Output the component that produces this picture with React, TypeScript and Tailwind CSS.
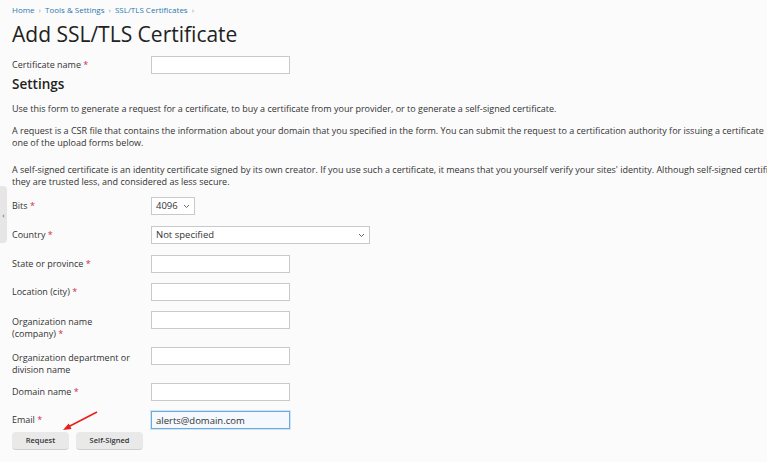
import React from "react";

const Req = () => <span className="text-[#d02d4a]"> *</span>;

interface RowProps {
  label: React.ReactNode;
  children: React.ReactNode;
  h: string;
}

// label's first line lines up with the middle of the field
const Row: React.FC<RowProps> = ({ label, children, h }) => (
  <div className={`flex items-start ${h}`}>
    <div className="w-[139px] shrink-0 pt-[3px] text-[9px] leading-[12px] text-[#333]">
      {label}
    </div>
    {children}
  </div>
);

const TextBox = ({ value = "" }: { value?: string }) => (
  <input
    type="text"
    defaultValue={value}
    className="h-[18px] w-[139px] border border-[#c9c9c9] bg-white px-1 text-[9.5px] outline-none"
  />
);

const Chevron = () => (
  <svg width="7" height="5" viewBox="0 0 7 5" className="text-[#555]">
    <path d="M1 1l2.5 2.5L6 1" fill="none" stroke="currentColor" strokeWidth="0.9" />
  </svg>
);

export default function App() {
  return (
    <div className="relative h-[462px] w-[767px] overflow-hidden bg-[#fbfbfb] font-['Open_Sans',sans-serif] text-[#333]">
      {/* side collapse tab */}
      <div className="absolute left-0 top-[186px] flex h-[57px] w-[7px] items-center justify-center rounded-r-sm bg-[#e6e6e6] text-[8px] text-[#555]">
        ‹
      </div>

      <div className="w-[900px] px-3 pt-[5px]">
        <nav className="flex items-center gap-[4px] text-[8px] leading-[10px] text-[#2a7ab0]">
          <span>Home</span>
          <span className="text-[#999]">›</span>
          <span>Tools &amp; Settings</span>
          <span className="text-[#999]">›</span>
          <span>SSL/TLS Certificates</span>
          <span className="text-[#999]">›</span>
        </nav>

        <h1 className="mt-[5px] text-[21px] leading-[28px] text-[#222]">
          Add SSL/TLS Certificate
        </h1>

        <div className="mt-[8px] flex h-[18px] items-center">
          <div className="w-[139px] shrink-0 text-[9px] leading-[12px]">
            Certificate name<Req />
          </div>
          <TextBox />
        </div>

        <h2 className="mt-[1px] text-[13.5px] font-semibold leading-[18px] text-[#222]">
          Settings
        </h2>

        <div className="mt-[10px] whitespace-nowrap text-[9px] leading-[12px] text-[#333]">
          <p>
            Use this form to generate a request for a certificate, to buy a certificate from your provider, or to generate a self-signed certificate.
          </p>
          <p className="mt-[10px]">
            A request is a CSR file that contains the information about your domain that you specified in the form. You can submit the request to a certification authority for issuing a certificate
            <br />
            one of the upload forms below.
          </p>
          <p className="mt-[15px]">
            A self-signed certificate is an identity certificate signed by its own creator. If you use such a certificate, it means that you yourself verify your sites' identity. Although self-signed certificates
            <br />
            they are trusted less, and considered as less secure.
          </p>
        </div>

        <div className="mt-[9px] flex flex-col">
          <Row label={<>Bits<Req /></>} h="h-[29px]">
            <div className="flex h-[18px] w-[44px] items-center justify-between border border-[#c9c9c9] bg-white px-1 text-[9.5px]">
              <span>4096</span>
              <Chevron />
            </div>
          </Row>
          <Row label={<>Country<Req /></>} h="h-[29px]">
            <div className="flex h-[18px] w-[219px] items-center justify-between border border-[#c9c9c9] bg-white px-1 text-[9.5px]">
              <span>Not specified</span>
              <Chevron />
            </div>
          </Row>
          <Row label={<>State or province<Req /></>} h="h-[28px]">
            <TextBox />
          </Row>
          <Row label={<>Location (city)<Req /></>} h="h-[28px]">
            <TextBox />
          </Row>
          <Row label={<><span className="block pt-[2px]">Organization name</span>(company)<Req /></>} h="h-[36px]">
            <TextBox />
          </Row>
          <Row label={<><span className="block pt-[2px]">Organization department or</span>division name</>} h="h-[36px]">
            <TextBox />
          </Row>
          <Row label={<>Domain name<Req /></>} h="h-[28px]">
            <TextBox />
          </Row>
          <Row label={<>Email<Req /></>} h="h-[21px]">
            <input
              type="text"
              defaultValue="alerts@domain.com"
              className="h-[18px] w-[139px] border border-[#6fa9d8] bg-[#f3f9fe] px-1 text-[9.5px] shadow-[0_0_0_1px_#cfe4f5] outline-none"
            />
          </Row>
        </div>

        <div className="relative flex gap-[7px]">
          <button className="h-[18px] w-[57px] rounded-sm border-b border-[#cfcfcf] bg-[#e9e9e9] text-[7.5px] font-semibold text-[#333]">
            Request
          </button>
          <button className="h-[18px] w-[67px] rounded-sm border-b border-[#cfcfcf] bg-[#e9e9e9] text-[7.5px] font-semibold text-[#333]">
            Self-Signed
          </button>
          {/* red pointer arrow */}
          <svg
            className="absolute left-[46px] top-[-22px]"
            width="44"
            height="24"
            viewBox="0 0 44 24"
          >
            <line x1="39" y1="2" x2="11" y2="16.5" stroke="#e8201a" strokeWidth="1.6" />
            <path d="M5 20L13.5 18.9L10.7 13.6Z" fill="#e8201a" />
          </svg>
        </div>
      </div>
    </div>
  );
}
